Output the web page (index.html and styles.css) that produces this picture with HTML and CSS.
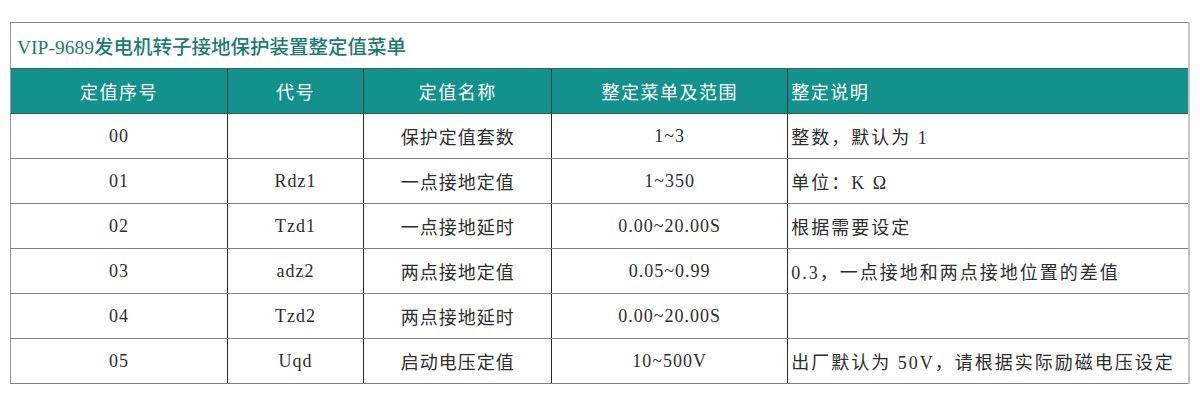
FILE: index.html
```html
<!DOCTYPE html>
<html lang="zh-CN">
<head>
<meta charset="utf-8">
<link rel="stylesheet" href="styles.css">
<title>VIP-9689发电机转子接地保护装置整定值菜单</title>
</head>
<body>
<div class="page">
<table class="menu">
  <colgroup>
    <col class="c1"><col class="c2"><col class="c3"><col class="c4"><col class="c5">
  </colgroup>
  <thead>
    <tr class="title-row"><th colspan="5" class="title">VIP-9689发电机转子接地保护装置整定值菜单</th></tr>
    <tr class="head-row">
      <th>定值序号</th><th>代号</th><th>定值名称</th><th>整定菜单及范围</th><th class="left">整定说明</th>
    </tr>
  </thead>
  <tbody>
    <tr><td>00</td><td></td><td>保护定值套数</td><td>1~3</td><td class="left note">整数，默认为 1</td></tr>
    <tr><td>01</td><td>Rdz1</td><td>一点接地定值</td><td>1~350</td><td class="left note">单位：K Ω</td></tr>
    <tr><td>02</td><td>Tzd1</td><td>一点接地延时</td><td>0.00~20.00S</td><td class="left note">根据需要设定</td></tr>
    <tr><td>03</td><td>adz2</td><td>两点接地定值</td><td>0.05~0.99</td><td class="left note">0.3，一点接地和两点接地位置的差值</td></tr>
    <tr><td>04</td><td>Tzd2</td><td>两点接地延时</td><td>0.00~20.00S</td><td class="left note"></td></tr>
    <tr><td>05</td><td>Uqd</td><td>启动电压定值</td><td>10~500V</td><td class="left note">出厂默认为 50V，请根据实际励磁电压设定</td></tr>
  </tbody>
</table>
</div>
</body>
</html>
```

FILE: styles.css
```css
html, body {
  margin: 0;
  padding: 0;
  background: #ffffff;
}

.page {
  padding: 22px 0 0 10px;
}

.menu {
  border-collapse: collapse;
  table-layout: fixed;
  width: 1180px;
  font-family: "Liberation Serif", "Noto Sans CJK SC", serif;
  font-size: 18px;
  color: #2e2e2e;
  border-left: 1px solid #9a9a9a;
  border-top: 1px solid #8a8a8a;
  border-right: 2px solid #c4c4c4;
  border-bottom: 1px solid #6e6e6e;
}

.c1 { width: 217px; }
.c2 { width: 136px; }
.c3 { width: 188px; }
.c4 { width: 236px; }
.c5 { width: 401px; }

.title-row th {
  height: 44px;
  padding: 0 0 1px 6px;
  text-align: left;
  font-size: 19.5px;
  font-weight: 500;
  color: #1c7b72;
  border-bottom: 1px solid #2f6e6a;
}

.head-row th {
  height: 44px;
  padding: 0;
  background: #13928d;
  color: #ffffff;
  font-weight: normal;
  font-size: 18px;
  letter-spacing: 1.5px;
  text-align: center;
  border-left: 1px solid #1d3a38;
  border-bottom: 1px solid #3b5856;
}

.head-row th:first-child {
  border-left: none;
}

.menu td {
  height: 44px;
  padding: 0;
  text-align: center;
  letter-spacing: 1px;
  border-left: 1px solid #2b2b2b;
  border-bottom: 1px solid #808080;
}

.menu td:first-child {
  border-left: none;
}

.menu .left {
  text-align: left;
  padding-left: 3px;
}

.menu td.note {
  letter-spacing: 2px;
}
```
